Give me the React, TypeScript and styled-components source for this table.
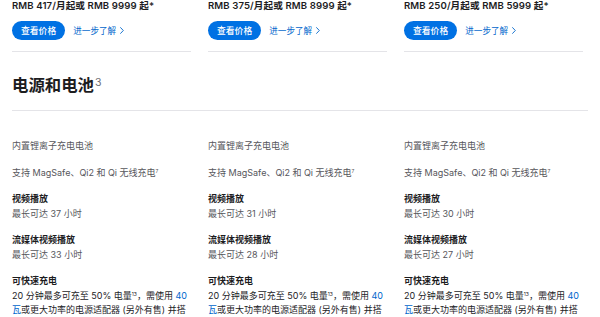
import React from "react";
import styled, { createGlobalStyle } from "styled-components";

const Global = createGlobalStyle`
  html, body { margin: 0; padding: 0; background: #fff; overflow: hidden; }
  body {
    font-family: "Inter", "Noto Sans CJK SC", "Noto Sans", sans-serif;
    color: #1d1d1f;
    -webkit-font-smoothing: antialiased;
  }
`;

const Page = styled.div`
  padding: 0 12px;
  width: 576px;
`;

const Grid = styled.div`
  display: grid;
  grid-template-columns: repeat(3, 179px);
  column-gap: 17px;
`;

const BuyCol = styled.div`
  display: flex;
  flex-direction: column;
  border-bottom: 1px solid #e4e4e8;
  height: 52px;
  box-sizing: border-box;
`;

const Price = styled.div`
  font-size: 9.6px;
  line-height: 11px;
  font-weight: 600;
  letter-spacing: 0.1px;
  white-space: nowrap;
`;

const Actions = styled.div`
  display: flex;
  align-items: center;
  gap: 8px;
  margin-top: 9.5px;
`;

const BuyButton = styled.button`
  border: none;
  background: #0071e3;
  color: #fff;
  height: 19px;
  padding: 0 9px;
  border-radius: 10px;
  font-family: inherit;
  font-size: 8.8px;
  font-weight: 500;
  line-height: 19px;
`;

const MoreLink = styled.a`
  color: #0066cc;
  font-size: 8.6px;
  text-decoration: none;
  display: flex;
  align-items: center;
  gap: 3.5px;
`;

const Heading = styled.h2`
  margin: 23px 0 0;
  font-size: 16.4px;
  line-height: 20px;
  font-weight: 600;
  padding-bottom: 15px;
  border-bottom: 1px solid #e4e4e8;
`;

const HeadSup = styled.sup`
  font-size: 10.5px;
  font-weight: 400;
  color: #6e6e73;
  vertical-align: 5px;
  line-height: 0;
  margin-left: 1px;
`;

const SpecCol = styled.div`
  display: flex;
  flex-direction: column;
  gap: 12px;
  padding-top: 28px;
`;

const Spec = styled.div`
  font-size: 9px;
  line-height: 14.5px;
`;

const SpecTitle = styled.div`
  font-weight: 600;
  color: #1d1d1f;
`;

const SpecValue = styled.div<{ $dark?: boolean }>`
  color: ${(p) => (p.$dark ? "#1d1d1f" : "#56565b")};
`;

const Fn = styled.sup`
  font-size: 5px;
  vertical-align: 3px;
  line-height: 0;
`;

const Blue = styled.span`
  color: #0066cc;
`;

const Chevron = () => (
  <svg width="4" height="7" viewBox="0 0 4 7" fill="none">
    <path d="M0.6 0.6 L3.3 3.5 L0.6 6.4" stroke="#0066cc" strokeWidth="0.9" strokeLinecap="round" strokeLinejoin="round" />
  </svg>
);

const models = [
  { price: "RMB 417/月起或 RMB 9999 起*", video: "37", stream: "33" },
  { price: "RMB 375/月起或 RMB 8999 起*", video: "31", stream: "28" },
  { price: "RMB 250/月起或 RMB 5999 起*", video: "30", stream: "27" },
];

export default function App() {
  return (
    <Page>
      <Global />
      <Grid>
        {models.map((m) => (
          <BuyCol key={m.price}>
            <Price>{m.price}</Price>
            <Actions>
              <BuyButton>查看价格</BuyButton>
              <MoreLink href="#">
                进一步了解 <Chevron />
              </MoreLink>
            </Actions>
          </BuyCol>
        ))}
      </Grid>
      <Heading>
        电源和电池<HeadSup>3</HeadSup>
      </Heading>
      <Grid>
        {models.map((m) => (
          <SpecCol key={m.price}>
            <Spec>
              <SpecValue>内置锂离子充电电池</SpecValue>
            </Spec>
            <Spec>
              <SpecValue>
                支持 MagSafe、Qi2 和 Qi 无线充电<Fn>7</Fn>
              </SpecValue>
            </Spec>
            <Spec>
              <SpecTitle>视频播放</SpecTitle>
              <SpecValue>最长可达 {m.video} 小时</SpecValue>
            </Spec>
            <Spec>
              <SpecTitle>流媒体视频播放</SpecTitle>
              <SpecValue>最长可达 {m.stream} 小时</SpecValue>
            </Spec>
            <Spec>
              <SpecTitle>可快速充电</SpecTitle>
              <SpecValue $dark>
                20 分钟最多可充至 50% 电量<Fn>13</Fn>，需使用 <Blue>40 瓦</Blue>或更大功率的电源适配器 (另外有售) 并搭配 USB-C 连接线使用
              </SpecValue>
            </Spec>
          </SpecCol>
        ))}
      </Grid>
    </Page>
  );
}
